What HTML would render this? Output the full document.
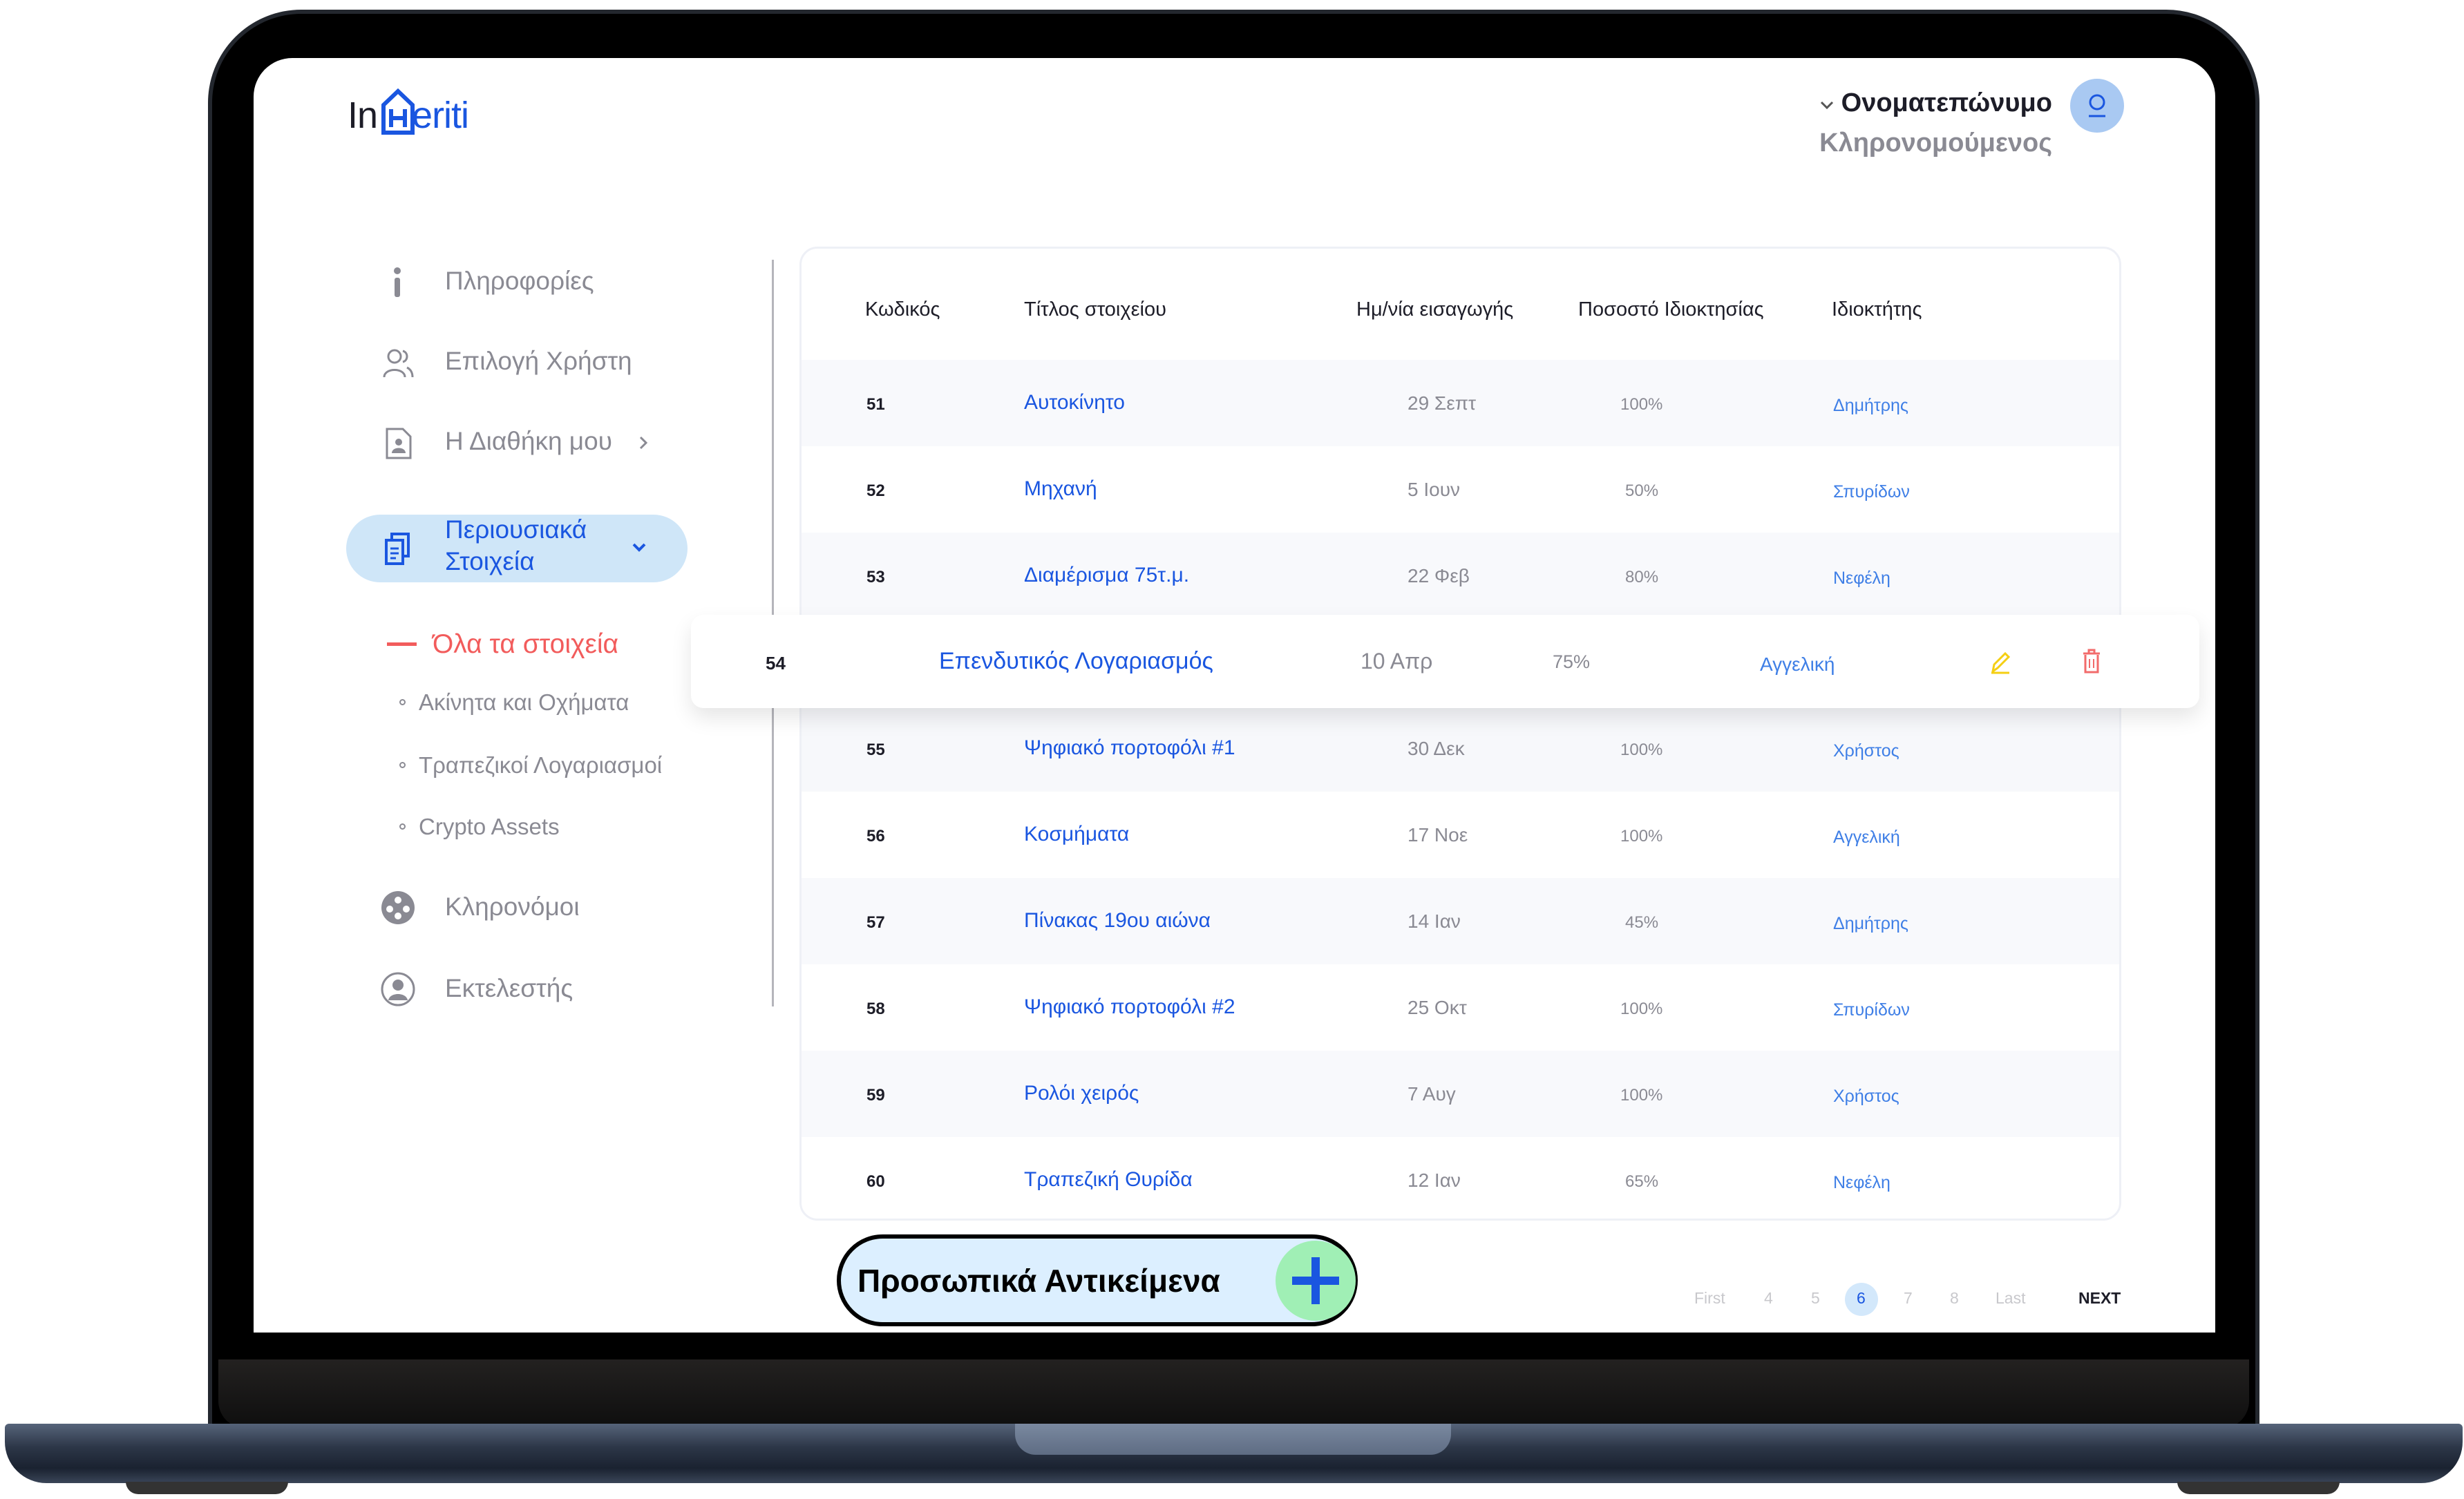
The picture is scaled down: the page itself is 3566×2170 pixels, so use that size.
<!DOCTYPE html>
<html><head><meta charset="utf-8">
<style>
*{margin:0;padding:0;box-sizing:border-box}
body{width:3566px;height:2170px;background:#fff;position:relative;overflow:hidden;font-family:"Liberation Sans","DejaVu Sans",sans-serif}
.abs{position:absolute}
.lid{left:301px;top:14px;width:2969px;height:2060px;background:#000;border-radius:135px 135px 0 0;border:6px solid #23272e}
.chin{left:316px;top:1968px;width:2939px;height:100px;background:linear-gradient(#232120,#0e0e0e);border-radius:0 0 40px 40px}
.screen{left:367px;top:84px;width:2839px;height:1845px;background:#fff;border-radius:56px 56px 0 0;overflow:hidden}
.base{left:7px;top:2061px;width:3557px;height:86px;background:linear-gradient(#56647a,#2c3647 40%,#1a2230 75%,#3a4558);border-radius:6px 6px 60px 60px}
.notch{left:1469px;top:2061px;width:631px;height:45px;background:linear-gradient(#7a89a0,#5e6c83);border-radius:0 0 30px 30px}
.foot{top:2145px;width:235px;height:18px;background:#333;border-radius:0 0 20px 20px}
.side{color:#8a8a93;font-size:37px}
.sub{color:#8a8a93;font-size:33px}
.hd{font-size:29px;color:#1d1d28}
.c{position:absolute;font-size:26px}
.code{color:#1d1d28;font-weight:bold;font-size:24px}
.title{color:#1a56e0;font-size:30px}
.date{color:#8a8a93;font-size:28px}
.pct{color:#8a8a93;font-size:24px}
.own{color:#3f7fe6;font-size:25px}
.pg{top:1866px;font-size:23px;color:#c8c8cc}
</style></head><body>
<div class="abs lid"></div>
<div class="abs chin"></div>
<div class="abs base"></div>
<div class="abs notch"></div>
<div class="abs foot" style="left:182px"></div>
<div class="abs foot" style="left:3151px"></div>

<div class="abs screen">
<div class="abs" style="left:136px;top:52px;font-size:54px;color:#1d1d28;letter-spacing:-1px">In<span style="display:inline-block;width:50px"></span><span style="color:#1a56e0">eriti</span></div>
<svg class="abs" style="left:184px;top:44px" width="50" height="68" viewBox="0 0 50 68"><path d="M4 64 V24 L25 4 L46 24 V64 Z" fill="none" stroke="#1a56e0" stroke-width="6"/><path d="M15 30 V56 M35 30 V56 M15 43 H35" stroke="#1a56e0" stroke-width="6" fill="none"/></svg>
<div class="abs" style="right:236px;top:44px;font-size:38px;font-weight:bold;color:#1d1d28">Ονοματεπώνυμο</div>
<div class="abs" style="right:236px;top:102px;font-size:38px;font-weight:bold;color:#8a8a93">Κληρονομούμενος</div>
<svg class="abs" style="left:2266px;top:60px" width="22" height="16"><path d="M3 4 L11 12 L19 4" fill="none" stroke="#555" stroke-width="3"/></svg>
<div class="abs" style="left:2629px;top:30px;width:78px;height:78px;border-radius:50%;background:#a9c9f2"></div>
<svg class="abs" style="left:2648px;top:48px" width="40" height="42"><circle cx="20" cy="16" r="10" fill="none" stroke="#1a56e0" stroke-width="3"/><path d="M8 36 H32" stroke="#1a56e0" stroke-width="3"/></svg>

<svg class="abs" style="left:196px;top:302px" width="24" height="46"><circle cx="12" cy="6" r="5" fill="#8a8a93"/><rect x="8" y="16" width="8" height="28" rx="3" fill="#8a8a93"/></svg>
<div class="abs side" style="left:277px;top:302px">Πληροφορίες</div>
<svg class="abs" style="left:186px;top:418px" width="48" height="48"><circle cx="18" cy="14" r="9" fill="none" stroke="#8a8a93" stroke-width="3"/><path d="M3 44 C3 30 33 30 33 44" fill="none" stroke="#8a8a93" stroke-width="3"/><path d="M30 6 C38 8 38 20 30 22 M36 30 C42 33 44 38 44 44" fill="none" stroke="#8a8a93" stroke-width="3"/></svg>
<div class="abs side" style="left:277px;top:418px">Επιλογή Χρήστη</div>
<svg class="abs" style="left:190px;top:534px" width="40" height="48"><path d="M3 3 H26 L37 14 V45 H3 Z" fill="none" stroke="#8a8a93" stroke-width="3"/><circle cx="20" cy="22" r="5" fill="#8a8a93"/><path d="M10 38 C10 28 30 28 30 38 Z" fill="#8a8a93"/></svg>
<div class="abs side" style="left:277px;top:534px">Η Διαθήκη μου</div>
<svg class="abs" style="left:556px;top:546px" width="16" height="22"><path d="M4 3 L12 11 L4 19" fill="none" stroke="#8a8a93" stroke-width="3"/></svg>

<div class="abs" style="left:134px;top:661px;width:494px;height:98px;border-radius:49px;background:#cfe6f8"></div>
<svg class="abs" style="left:188px;top:686px" width="40" height="50"><rect x="12" y="3" width="24" height="32" fill="none" stroke="#1a56e0" stroke-width="4"/><rect x="4" y="12" width="24" height="34" fill="#cfe6f8" stroke="#1a56e0" stroke-width="4"/><path d="M10 24 H22 M10 31 H22 M10 38 H18" stroke="#1a56e0" stroke-width="3"/></svg>
<div class="abs" style="left:277px;top:660px;font-size:37px;color:#1a56e0;line-height:46px">Περιουσιακά<br>Στοιχεία</div>
<svg class="abs" style="left:546px;top:700px" width="24" height="18"><path d="M4 4 L12 12 L20 4" fill="none" stroke="#1a56e0" stroke-width="4"/></svg>

<div class="abs" style="left:193px;top:846px;width:43px;height:5px;background:#f25c5c"></div>
<div class="abs" style="left:259px;top:827px;font-size:39px;color:#f25c5c">Όλα τα στοιχεία</div>
<div class="abs" style="left:211px;top:928px;width:9px;height:9px;border-radius:50%;border:2px solid #8a8a93"></div>
<div class="abs sub" style="left:239px;top:914px">Ακίνητα και Οχήματα</div>
<div class="abs" style="left:211px;top:1019px;width:9px;height:9px;border-radius:50%;border:2px solid #8a8a93"></div>
<div class="abs sub" style="left:239px;top:1005px">Τραπεζικοί Λογαριασμοί</div>
<div class="abs" style="left:211px;top:1108px;width:9px;height:9px;border-radius:50%;border:2px solid #8a8a93"></div>
<div class="abs sub" style="left:239px;top:1094px">Crypto Assets</div>
<svg class="abs" style="left:183px;top:1204px" width="52" height="52"><circle cx="26" cy="26" r="24" fill="#8a8a93"/><circle cx="26" cy="15" r="5" fill="#fff"/><circle cx="14" cy="28" r="5" fill="#fff"/><circle cx="38" cy="28" r="5" fill="#fff"/><circle cx="26" cy="38" r="5" fill="#fff"/></svg>
<div class="abs side" style="left:277px;top:1208px">Κληρονόμοι</div>
<svg class="abs" style="left:183px;top:1322px" width="52" height="52"><circle cx="26" cy="26" r="23" fill="none" stroke="#8a8a93" stroke-width="3"/><circle cx="26" cy="20" r="8" fill="#8a8a93"/><path d="M12 42 C14 30 38 30 40 42 Z" fill="#8a8a93"/></svg>
<div class="abs side" style="left:277px;top:1326px">Εκτελεστής</div>

<div class="abs" style="left:750px;top:292px;width:3px;height:1081px;background:#b5b5bb"></div>

<div class="abs" style="left:790px;top:273px;width:1913px;height:1410px;border:3px solid #eef0f6;border-radius:26px;background:#fff"></div>
<div class="abs hd" style="left:885px;top:348px">Κωδικός</div>
<div class="abs hd" style="left:1115px;top:348px">Τίτλος στοιχείου</div>
<div class="abs hd" style="left:1596px;top:348px">Ημ/νία εισαγωγής</div>
<div class="abs hd" style="left:1917px;top:348px">Ποσοστό Ιδιοκτησίας</div>
<div class="abs hd" style="left:2284px;top:348px">Ιδιοκτήτης</div>
</div>

<div class="abs" style="left:1160px;top:521px;width:1907px;height:125px;background:#f8f9fc"></div>
<div class="abs" style="left:1160px;top:771px;width:1907px;height:125px;background:#f8f9fc"></div>
<div class="abs" style="left:1160px;top:1021px;width:1907px;height:125px;background:#f7f8fb"></div>
<div class="abs" style="left:1160px;top:1271px;width:1907px;height:125px;background:#f8f9fc"></div>
<div class="abs" style="left:1160px;top:1521px;width:1907px;height:125px;background:#f8f9fc"></div>

<div class="abs c code" style="left:1254px;top:572px">51</div><div class="abs c title" style="left:1482px;top:566px">Αυτοκίνητο</div><div class="abs c date" style="left:2037px;top:568px">29 Σεπτ</div><div class="abs c pct" style="left:2345px;top:572px">100%</div><div class="abs c own" style="left:2653px;top:573px">Δημήτρης</div>
<div class="abs c code" style="left:1254px;top:697px">52</div><div class="abs c title" style="left:1482px;top:691px">Μηχανή</div><div class="abs c date" style="left:2037px;top:693px">5 Ιουν</div><div class="abs c pct" style="left:2352px;top:697px">50%</div><div class="abs c own" style="left:2653px;top:698px">Σπυρίδων</div>
<div class="abs c code" style="left:1254px;top:822px">53</div><div class="abs c title" style="left:1482px;top:816px">Διαμέρισμα 75τ.μ.</div><div class="abs c date" style="left:2037px;top:818px">22 Φεβ</div><div class="abs c pct" style="left:2352px;top:822px">80%</div><div class="abs c own" style="left:2653px;top:823px">Νεφέλη</div>
<div class="abs c code" style="left:1254px;top:1072px">55</div><div class="abs c title" style="left:1482px;top:1066px">Ψηφιακό πορτοφόλι #1</div><div class="abs c date" style="left:2037px;top:1068px">30 Δεκ</div><div class="abs c pct" style="left:2345px;top:1072px">100%</div><div class="abs c own" style="left:2653px;top:1073px">Χρήστος</div>
<div class="abs c code" style="left:1254px;top:1197px">56</div><div class="abs c title" style="left:1482px;top:1191px">Κοσμήματα</div><div class="abs c date" style="left:2037px;top:1193px">17 Νοε</div><div class="abs c pct" style="left:2345px;top:1197px">100%</div><div class="abs c own" style="left:2653px;top:1198px">Αγγελική</div>
<div class="abs c code" style="left:1254px;top:1322px">57</div><div class="abs c title" style="left:1482px;top:1316px">Πίνακας 19ου αιώνα</div><div class="abs c date" style="left:2037px;top:1318px">14 Ιαν</div><div class="abs c pct" style="left:2352px;top:1322px">45%</div><div class="abs c own" style="left:2653px;top:1323px">Δημήτρης</div>
<div class="abs c code" style="left:1254px;top:1447px">58</div><div class="abs c title" style="left:1482px;top:1441px">Ψηφιακό πορτοφόλι #2</div><div class="abs c date" style="left:2037px;top:1443px">25 Οκτ</div><div class="abs c pct" style="left:2345px;top:1447px">100%</div><div class="abs c own" style="left:2653px;top:1448px">Σπυρίδων</div>
<div class="abs c code" style="left:1254px;top:1572px">59</div><div class="abs c title" style="left:1482px;top:1566px">Ρολόι χειρός</div><div class="abs c date" style="left:2037px;top:1568px">7 Αυγ</div><div class="abs c pct" style="left:2345px;top:1572px">100%</div><div class="abs c own" style="left:2653px;top:1573px">Χρήστος</div>
<div class="abs c code" style="left:1254px;top:1697px">60</div><div class="abs c title" style="left:1482px;top:1691px">Τραπεζική Θυρίδα</div><div class="abs c date" style="left:2037px;top:1693px">12 Ιαν</div><div class="abs c pct" style="left:2352px;top:1697px">65%</div><div class="abs c own" style="left:2653px;top:1698px">Νεφέλη</div>

<div class="abs" style="left:1000px;top:890px;width:2183px;height:135px;background:#fff;border-radius:18px;box-shadow:0 14px 30px rgba(0,0,0,0.10)"></div>
<div class="abs c code" style="left:1108px;top:945px;font-size:26px">54</div>
<div class="abs c title" style="left:1359px;top:938px;font-size:34px">Επενδυτικός Λογαριασμός</div>
<div class="abs c date" style="left:1969px;top:939px;font-size:32px">10 Απρ</div>
<div class="abs c pct" style="left:2247px;top:943px;font-size:27px">75%</div>
<div class="abs c own" style="left:2547px;top:946px;font-size:28px">Αγγελική</div>
<svg class="abs" style="left:2880px;top:942px" width="30" height="34"><path d="M4 30 L6 20 L22 4 L27 9 L11 25 Z" fill="none" stroke="#f5cf13" stroke-width="3"/><path d="M2 32 H28" stroke="#f5cf13" stroke-width="3"/></svg>
<svg class="abs" style="left:3013px;top:938px" width="28" height="38"><path d="M2 8 H26 M10 8 V3 H18 V8" fill="none" stroke="#f26b6b" stroke-width="3"/><path d="M5 10 V35 H23 V10" fill="none" stroke="#f26b6b" stroke-width="3"/><path d="M11 16 V29 M17 16 V29" stroke="#f26b6b" stroke-width="2"/></svg>

<div class="abs" style="left:1211px;top:1787px;width:754px;height:133px;border-radius:67px;background:#dcefff;border:6px solid #000"></div>
<div class="abs" style="left:1241px;top:1827px;font-size:46px;font-weight:bold;color:#000">Προσωπικά Αντικείμενα</div>
<div class="abs" style="left:1846px;top:1796px;width:116px;height:116px;border-radius:50%;background:#a0efb5"></div>
<div class="abs" style="left:1898px;top:1820px;width:12px;height:68px;background:#1a56e0"></div>
<div class="abs" style="left:1870px;top:1848px;width:68px;height:12px;background:#1a56e0"></div>

<div class="abs pg" style="left:2452px">First</div>
<div class="abs pg" style="left:2553px">4</div>
<div class="abs pg" style="left:2621px">5</div>
<div class="abs" style="left:2670px;top:1857px;width:48px;height:48px;border-radius:50%;background:#d3e8fb"></div>
<div class="abs pg" style="left:2687px;color:#1a56e0">6</div>
<div class="abs pg" style="left:2755px">7</div>
<div class="abs pg" style="left:2822px">8</div>
<div class="abs pg" style="left:2888px">Last</div>
<div class="abs pg" style="left:3008px;color:#1d1d28;font-weight:bold">NEXT</div>
</body></html>
